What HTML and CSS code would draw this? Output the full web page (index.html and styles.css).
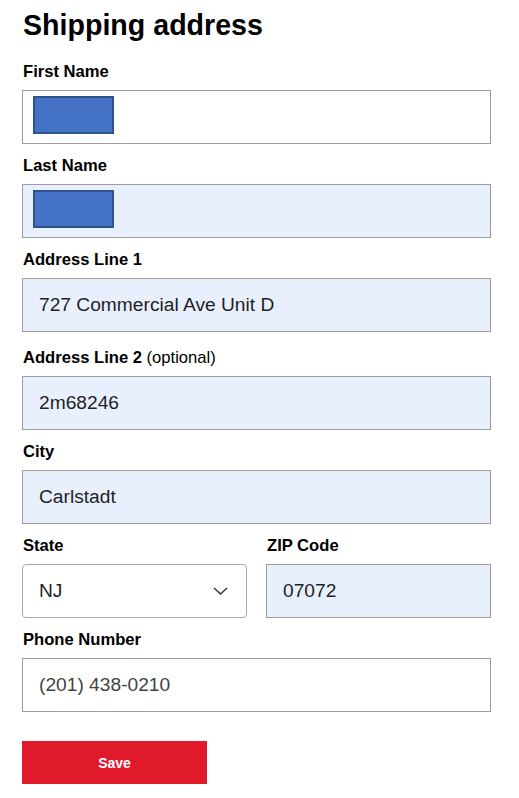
FILE: index.html
```html
<!DOCTYPE html>
<html lang="en">
<head>
<meta charset="utf-8">
<title>Shipping address</title>
<link rel="stylesheet" href="styles.css">
</head>
<body>
<form class="page">
  <h1 class="title">Shipping address</h1>

  <div class="group">
    <label class="label">First Name</label>
    <div class="box"><span class="redact"></span></div>
  </div>

  <div class="group">
    <label class="label">Last Name</label>
    <div class="box filled"><span class="redact"></span></div>
  </div>

  <div class="group group-wide">
    <label class="label">Address Line 1</label>
    <div class="box filled"><span class="value">727 Commercial Ave Unit D</span></div>
  </div>

  <div class="group">
    <label class="label">Address Line 2 <span class="optional">(optional)</span></label>
    <div class="box filled"><span class="value">2m68246</span></div>
  </div>

  <div class="group">
    <label class="label">City</label>
    <div class="box filled"><span class="value">Carlstadt</span></div>
  </div>

  <div class="row group">
    <div>
      <label class="label">State</label>
      <div class="box select"><span class="value">NJ</span>
        <svg class="chev" width="15" height="8" viewBox="0 0 15 8"><path d="M1 1 L7.5 7 L14 1" fill="none" stroke="#333" stroke-width="1.4"/></svg>
      </div>
    </div>
    <div>
      <label class="label">ZIP Code</label>
      <div class="box filled"><span class="value">07072</span></div>
    </div>
  </div>

  <div class="group last">
    <label class="label">Phone Number</label>
    <div class="box"><span class="value muted">(201) 438-0210</span></div>
  </div>

  <button type="button" class="save">Save</button>
</form>
</body>
</html>
```

FILE: styles.css
```css
* { box-sizing: border-box; }
html, body { margin: 0; padding: 0; background: #fff; }
body { font-family: "Liberation Sans", Arial, sans-serif; color: #000; }

.page {
  width: 491px;
  padding: 0 0 0 22px;
}

.title {
  font-size: 28.6px;
  font-weight: 700;
  line-height: 33px;
  margin: 9px 0 21px 1px;
}

.group { margin-bottom: 13px; }
.group-wide { margin-bottom: 17px; }
.group.last { margin-bottom: 29px; }

.label {
  display: block;
  font-size: 16.6px;
  font-weight: 700;
  line-height: 18px;
  margin: 0 0 9px 1px;
}
.optional { font-weight: 400; }

.box {
  position: relative;
  height: 54px;
  border: 1px solid #9d9d9d;
  background: #fff;
  display: flex;
  align-items: center;
  padding: 0 16px;
}
.box.filled { background: #e8f0fe; }
.box.select {
  border-color: #a8a8a8;
  border-radius: 4px;
  justify-content: space-between;
  padding-right: 18px;
}

.value {
  font-size: 19.2px;
  color: #1f1f1f;
  line-height: 22px;
}
.value.muted { color: #444; }

.redact {
  position: absolute;
  left: 10px;
  top: 5px;
  width: 81px;
  height: 38px;
  background: #4472c4;
  border: 2px solid #2f528f;
}

.row {
  display: grid;
  grid-template-columns: 225px 225px;
  column-gap: 19px;
}

.chev { display: block; }

.save {
  display: block;
  width: 185px;
  height: 43px;
  border: 0;
  background: #e0192b;
  color: #fff;
  font-family: "Liberation Sans", Arial, sans-serif;
  font-size: 14px;
  font-weight: 700;
  padding: 0;
  cursor: pointer;
}
```
